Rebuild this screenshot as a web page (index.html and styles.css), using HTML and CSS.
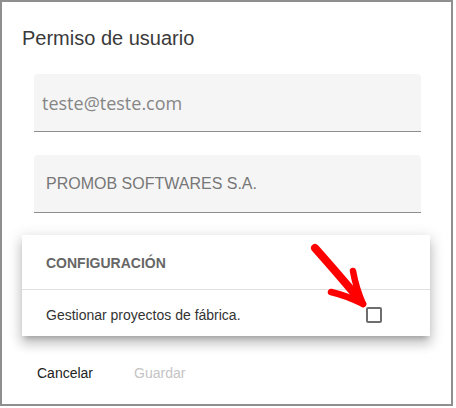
FILE: index.html
```html
<!DOCTYPE html>
<html lang="es">
<head>
<meta charset="utf-8">
<title>Permiso de usuario</title>
<link rel="stylesheet" href="styles.css">
</head>
<body>
<div class="frame">
  <h2 class="title">Permiso de usuario</h2>
  <div class="field field-email"><span class="value email">teste@teste.com</span></div>
  <div class="field field-company"><span class="value company">PROMOB SOFTWARES S.A.</span></div>
  <div class="card">
    <div class="card-header">CONFIGURACIÓN</div>
    <div class="card-row">
      <span class="row-label">Gestionar proyectos de fábrica.</span>
      <span class="checkbox"></span>
    </div>
  </div>
  <div class="actions">
    <button class="btn btn-cancel">Cancelar</button>
    <button class="btn btn-save" disabled>Guardar</button>
  </div>
</div>
<svg class="annotation" width="456" height="408" viewBox="0 0 456 408" xmlns="http://www.w3.org/2000/svg">
  <path d="M315 248 Q 339 275 359 299" fill="none" stroke="#ff0000" stroke-width="8" stroke-linecap="round"/>
  <path d="M331 292 Q 348 296 363 304" fill="none" stroke="#ff0000" stroke-width="6.5" stroke-linecap="round"/>
  <path d="M353 271 Q 356 288 363 304" fill="none" stroke="#ff0000" stroke-width="6.5" stroke-linecap="round"/>
</svg>
</body>
</html>
```
FILE: styles.css
```css
html, body {
  margin: 0;
  padding: 0;
  background: #ffffff;
}
body {
  font-family: "Liberation Sans", Arial, sans-serif;
  width: 456px;
  height: 408px;
  overflow: hidden;
}
.frame {
  box-sizing: border-box;
  width: 453px;
  height: 406px;
  border: 2px solid #8f8f8f;
  padding-top: 24px;
  display: flex;
  flex-direction: column;
  align-items: flex-start;
}
.title {
  margin: 0 0 0 20px;
  font-size: 20px;
  line-height: 24px;
  font-weight: normal;
  color: #3a3a3a;
}
.field {
  box-sizing: border-box;
  width: 387px;
  height: 58px;
  margin-left: 32px;
  background: #f5f5f5;
  border-radius: 4px 4px 0 0;
  border-bottom: 1px solid #8e8e8e;
  display: flex;
  align-items: center;
}
.field-email {
  margin-top: 24px;
  padding-left: 8px;
}
.field-company {
  margin-top: 23px;
  padding-left: 12px;
}
.email {
  font-family: "Open Sans", sans-serif;
  font-size: 18px;
  color: #868686;
}
.company {
  font-size: 16px;
  color: #777777;
}
.card {
  margin-top: 22px;
  margin-left: 20px;
  width: 408px;
  background: #ffffff;
  box-shadow: 0 5px 5px -3px rgba(0,0,0,0.2), 0 8px 10px 1px rgba(0,0,0,0.14), 0 3px 14px 2px rgba(0,0,0,0.12);
}
.card-header {
  box-sizing: border-box;
  height: 55px;
  padding: 2px 0 0 24px;
  display: flex;
  align-items: center;
  font-size: 14px;
  font-weight: bold;
  color: #666666;
  border-bottom: 1px solid #e0e0e0;
}
.card-row {
  box-sizing: border-box;
  height: 46px;
  padding: 3px 48px 0 24px;
  display: flex;
  align-items: center;
  justify-content: space-between;
}
.row-label {
  font-size: 14px;
  color: #333333;
}
.checkbox {
  box-sizing: border-box;
  width: 16px;
  height: 16px;
  border: 2px solid #6e6e6e;
  border-radius: 2px;
}
.actions {
  margin-top: 19px;
  padding-left: 27px;
  display: flex;
  gap: 25px;
}
.btn {
  font-family: "Liberation Sans", Arial, sans-serif;
  font-size: 14px;
  height: 36px;
  line-height: 36px;
  padding: 0 8px;
  border: none;
  background: transparent;
  color: #222222;
}
.btn-save {
  color: #c4c4c4;
}
.annotation {
  position: absolute;
  left: 0;
  top: 0;
  pointer-events: none;
}
```
